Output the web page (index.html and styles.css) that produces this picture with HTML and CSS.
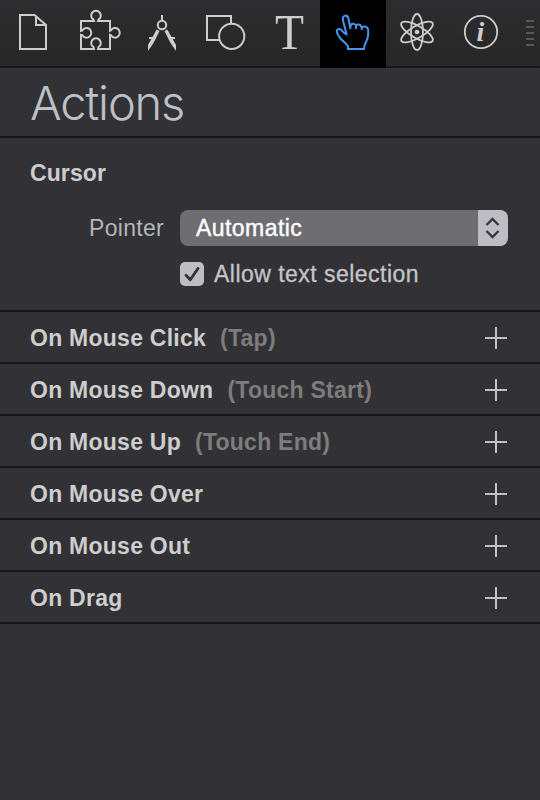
FILE: index.html
```
<!DOCTYPE html>
<html lang="en">
<head>
<meta charset="utf-8">
<title>Actions</title>
<link rel="stylesheet" href="styles.css">
</head>
<body>
<main class="inspector">
  <nav class="toolbar">
    <button class="tool" aria-label="Document"><svg viewBox="0 0 64 68"><path d="M20 15H34.500L46 25V49H20ZM36 15.500V25H46"/></svg></button>
    <button class="tool" aria-label="Element"><svg viewBox="64 0 64 68"><path d="M81 21H94L93.500 19.700A4.800 4.800 0 1 1 98.500 19.700L98 21H110V30.800L111 30.300A4.700 4.900 0 1 1 111 35.300L110 34.800V49H98L98.500 47.200A4.800 4.800 0 1 0 93.500 47.200L94 49H81V34.800L82.500 35.300A4.700 4.900 0 1 0 82.500 30.300L81 30.800Z"/></svg></button>
    <button class="tool" aria-label="Metrics"><svg viewBox="128 0 64 68"><path d="M162 15V20"/><circle cx="162" cy="25" r="4.200"/><path class="solid" d="M156.700 29.500L159.500 31L153.500 43L148 51V45ZM167.300 29.500L164.500 31L170.500 43L176 51V45Z"/><path class="thin" d="M149 38H153M171 38H175"/></svg></button>
    <button class="tool" aria-label="Shapes"><svg viewBox="192 0 64 68"><path d="M219 40H207V16H231V23"/><circle cx="231.700" cy="36.300" r="12.600"/></svg></button>
    <button class="tool" aria-label="Typography"><svg viewBox="256 0 64 68"><text class="type-mark" x="289.500" y="49" text-anchor="middle" textLength="29" lengthAdjust="spacingAndGlyphs">T</text></svg></button>
    <button class="tool tool-active" aria-label="Actions"><svg viewBox="320 0 66 68"><path d="M348 49V46.500C346 43 343 41.500 340.500 38.500C338.500 36 337 33.500 336.800 31.500C336.500 29.500 338.500 28.300 340.500 29.300C342.500 30.500 343.500 33.500 346.500 34.200L343 20.500C342.300 17.500 343.200 16 345 15.700C347 15.300 348 16.700 348.500 19L350.500 29M350.500 27C350.500 24.500 351.300 23.700 353 23.700C355.500 23.700 356.200 25 356.200 29M356 27C356 25 357 24.300 358.700 24.500C361 24.800 361.800 26 361.800 30M361.600 28.500C362 26.800 363 26.300 364.500 26.600C367 27 368.200 28 368.200 30.500C368.500 36 367.700 39 366 42C364.800 44.200 364 45.500 364 49H347"/></svg></button>
    <button class="tool tool-narrow" aria-label="Physics"><svg viewBox="386 0 62 68"><g class="thin"><ellipse cx="417" cy="32" rx="6" ry="18"/><ellipse cx="417" cy="32" rx="6" ry="18" transform="rotate(60 417 32)"/><ellipse cx="417" cy="32" rx="6" ry="18" transform="rotate(-60 417 32)"/></g><circle class="solid" cx="417" cy="32" r="2.300"/></svg></button>
    <button class="tool" aria-label="Identity"><svg viewBox="448 0 64 68"><circle cx="481" cy="32" r="16.200" class="thin"/><text class="info-mark" x="480.500" y="41" text-anchor="middle">i</text></svg></button>
    <div class="grip"><i></i><i></i><i></i><i></i><i></i></div>
  </nav>
  <header class="heading"><h1>Actions</h1></header>
  <section class="cursor">
    <h2>Cursor</h2>
    <div class="field">
      <span class="label">Pointer</span>
      <div class="select"><span class="value">Automatic</span><span class="stepper"><svg viewBox="0 0 30 36"><path d="M8.500 15L14.500 9L20.500 15M8.500 21L14.500 27L20.500 21"/></svg></span></div>
    </div>
    <div class="check-row"><span class="checkbox"><svg viewBox="0 0 24 24"><path d="M6 13.200L10.300 17.700L18 6.500"/></svg></span><span class="check-label">Allow text selection</span></div>
  </section>
  <section class="events">
    <div class="event"><b>On Mouse Click</b><b class="hint">(Tap)</b><span class="plus"></span></div>
    <div class="event"><b>On Mouse Down</b><b class="hint">(Touch Start)</b><span class="plus"></span></div>
    <div class="event"><b>On Mouse Up</b><b class="hint">(Touch End)</b><span class="plus"></span></div>
    <div class="event"><b>On Mouse Over</b><span class="plus"></span></div>
    <div class="event"><b>On Mouse Out</b><span class="plus"></span></div>
    <div class="event"><b>On Drag</b><span class="plus"></span></div>
  </section>
</main>
</body>
</html>
```
FILE: styles.css
```
* { box-sizing: border-box; }
body { margin: 0; background: #323135; color: #cdcdcd; font-family: "Liberation Sans", sans-serif; }
.inspector { height: 800px; overflow: hidden; }
.toolbar { display: flex; height: 68px; border-bottom: 2px solid #17171a; background: linear-gradient(#2d2d2f, #272727); }
.tool { flex: 0 0 64px; height: 68px; padding: 0; border: 0; background: none; color: #cdcdcd; }
.tool svg { display: block; width: 100%; height: 68px; fill: none; stroke: currentColor; stroke-width: 2; }
.tool-active { flex-basis: 66px; background: #000; color: #4196ed; }
.tool-narrow { flex-basis: 62px; }
.tool .thin { stroke-width: 1.800; }
.tool .solid { fill: currentColor; stroke: none; }
.tool text { fill: currentColor; stroke: none; font-family: "Liberation Serif", serif; }
.type-mark { font-size: 51px; }
.info-mark { font-size: 28px; font-weight: bold; font-style: italic; }
.grip { display: flex; flex-direction: column; gap: 4px; margin: 20px 0 0 14px; }
.grip i { width: 8px; height: 2px; background: #58575d; }
.heading { height: 70px; padding: 7px 30px 0; border-bottom: 2px solid #17171a; }
h1 { margin: 0; font: 300 47px/56px Inter, sans-serif; letter-spacing: -1.200px; color: #bcc1c7; }
.cursor { height: 174px; padding: 22px 32px 0 30px; border-bottom: 2px solid #17171a; }
h2 { margin: 0; font-size: 23px; line-height: 26px; letter-spacing: 0.100px; }
.field { display: flex; height: 36px; margin-top: 24px; line-height: 36px; }
.label { width: 150px; padding-right: 16px; text-align: right; font-size: 23px; letter-spacing: 0.300px; color: #b3b7bd; }
.select { flex: 1; display: flex; justify-content: space-between; overflow: hidden; border-radius: 8px; background: #6e6d72; color: #fff; }
.value { padding-left: 16px; font-size: 23px; letter-spacing: 0.450px; -webkit-text-stroke: 0.400px; }
.stepper { width: 30px; background: #bebdc3; }
svg { display: block; fill: none; }
.stepper svg { width: 30px; height: 36px; stroke: #38373b; stroke-width: 2.400; }
.check-row { display: flex; gap: 10px; align-items: center; height: 24px; margin: 16px 0 0 150px; }
.checkbox { width: 24px; height: 24px; border-radius: 5px; background: #bebdc3; }
.checkbox svg { stroke: #323135; stroke-width: 2.800; stroke-linecap: round; stroke-linejoin: round; }
.check-label { font-size: 23px; line-height: 24px; letter-spacing: 0.470px; color: #c4c5c8; -webkit-text-stroke: 0.300px; }
.event { display: flex; align-items: center; height: 52px; padding: 2px 32px 0 30px; border-bottom: 2px solid #17171a; font-size: 23px; letter-spacing: 0.250px; }
.hint { margin-left: 14px; color: #7d7d7e; }
.plus { width: 24px; height: 22px; margin-left: auto; background: linear-gradient(#bcc1c7, #bcc1c7) 11px 0 / 2px 22px no-repeat, linear-gradient(#bcc1c7, #bcc1c7) 1px 10px / 22px 2px no-repeat; }
```
